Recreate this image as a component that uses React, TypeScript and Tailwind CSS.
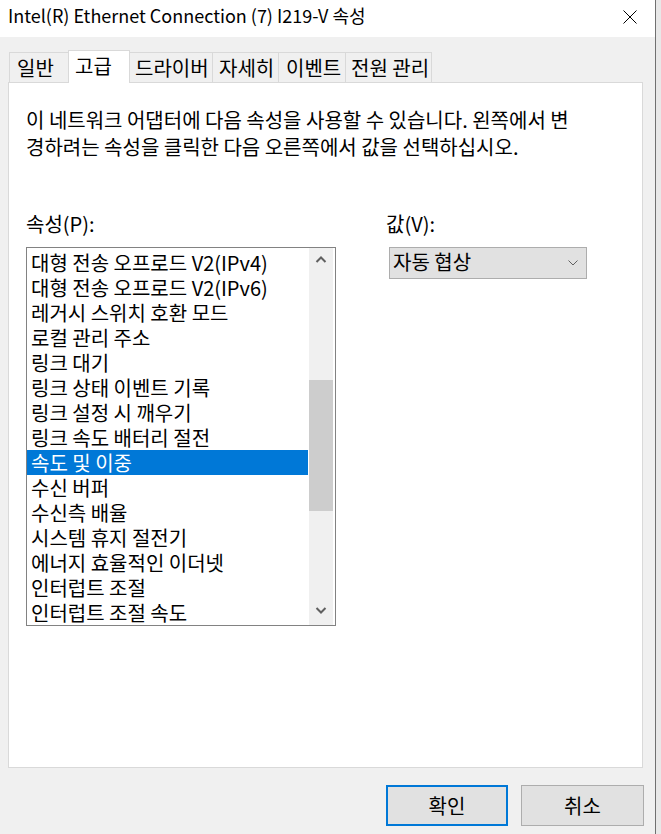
import React from "react";

const items = [
  "대형 전송 오프로드 V2(IPv4)",
  "대형 전송 오프로드 V2(IPv6)",
  "레거시 스위치 호환 모드",
  "로컬 관리 주소",
  "링크 대기",
  "링크 상태 이벤트 기록",
  "링크 설정 시 깨우기",
  "링크 속도 배터리 절전",
  "속도 및 이중",
  "수신 버퍼",
  "수신측 배율",
  "시스템 휴지 절전기",
  "에너지 효율적인 이더넷",
  "인터럽트 조절",
  "인터럽트 조절 속도",
];

const SELECTED = 8;

function Chevron({ up }: { up?: boolean }) {
  return (
    <svg width="12" height="9" viewBox="0 0 12 9">
      <polyline
        points={up ? "1.5,7 6,2.5 10.5,7" : "1.5,2 6,6.5 10.5,2"}
        fill="none"
        stroke="#606060"
        strokeWidth="2"
      />
    </svg>
  );
}

export default function App() {
  return (
    <div className="w-[661px] h-[834px] flex overflow-hidden bg-[#e8e8e8] text-black text-[20px] font-['Noto_Sans_CJK_KR',sans-serif]">
      <div className="w-[655px] h-full flex flex-col bg-[#f0f0f0]">
        {/* Title bar */}
        <div className="h-[37px] shrink-0 bg-white flex items-start justify-between pl-[8px] pr-[18px]">
          <span className="block pt-[3px] text-[18px] leading-[24px] whitespace-nowrap">
            Intel(R) Ethernet Connection (7) I219-V 속성
          </span>
          <svg width="14" height="14" viewBox="0 0 14 14" className="mt-[10px]">
            <path d="M0.5 0.5 L13.5 13.5 M13.5 0.5 L0.5 13.5" stroke="#000" strokeWidth="1" fill="none" />
          </svg>
        </div>

        {/* Body */}
        <div className="pl-[8px] pt-[13px] flex flex-col">
          {/* Tabs */}
          <div className="h-[33px] flex items-end pl-[1px] relative z-10">
            <div className="w-[59px] h-[30px] mb-px border-l border-t border-[#d9d9d9] bg-[#f0f0f0] pl-[7px] leading-[29px] whitespace-nowrap">
              일반
            </div>
            <div className="w-[62px] h-[33px] border-l border-t border-r border-[#d9d9d9] bg-white pl-[6px] leading-[29px] whitespace-nowrap">
              고급
            </div>
            <div className="w-[82px] h-[30px] mb-px border-t border-[#d9d9d9] bg-[#f0f0f0] pl-[5px] leading-[29px] whitespace-nowrap">
              드라이버
            </div>
            <div className="w-[66px] h-[30px] mb-px border-l border-t border-[#d9d9d9] bg-[#f0f0f0] pl-[6px] leading-[29px] whitespace-nowrap">
              자세히
            </div>
            <div className="w-[67px] h-[30px] mb-px border-l border-t border-[#d9d9d9] bg-[#f0f0f0] pl-[7px] leading-[29px] whitespace-nowrap">
              이벤트
            </div>
            <div className="w-[87px] h-[30px] mb-px border-l border-t border-r border-[#d9d9d9] bg-[#f0f0f0] pl-[5px] leading-[29px] whitespace-nowrap">
              전원 관리
            </div>
          </div>

          {/* Panel */}
          <div className="-mt-px w-[635px] h-[686px] border border-[#d9d9d9] bg-white pl-[17px] pt-[23px]">
            <p className="leading-[27px] whitespace-nowrap">
              이 네트워크 어댑터에 다음 속성을 사용할 수 있습니다. 왼쪽에서 변
              <br />
              경하려는 속성을 클릭한 다음 오른쪽에서 값을 선택하십시오.
            </p>

            <div className="mt-[50px] flex gap-[50px]">
              {/* Left column */}
              <div className="w-[310px] flex flex-col">
                <div className="leading-[27px]">속성(P):</div>
                <div className="mt-[10px] h-[379px] border border-[#828282] flex">
                  <div className="w-[281px] pt-[2px] flex flex-col">
                    {items.map((it, i) => (
                      <div
                        key={it}
                        className={
                          i === SELECTED
                            ? "h-[25px] leading-[25px] pl-[4px] whitespace-nowrap bg-[#0078d7] text-white"
                            : "h-[25px] leading-[25px] pl-[4px] whitespace-nowrap"
                        }
                      >
                        {it}
                      </div>
                    ))}
                  </div>
                  <div className="w-[24px] ml-[1px] bg-[#f0f0f0] flex flex-col">
                    <div className="h-[25px] flex items-center justify-center pb-[3px]">
                      <Chevron up />
                    </div>
                    <div className="flex-1 flex flex-col">
                      <div className="mt-[107px] h-[131px] bg-[#cdcdcd]" />
                    </div>
                    <div className="h-[25px] flex items-center justify-center pb-[4px]">
                      <Chevron />
                    </div>
                  </div>
                </div>
              </div>

              {/* Right column */}
              <div className="flex flex-col">
                <div className="leading-[27px]">값(V):</div>
                <div className="mt-[10px] ml-[3px] w-[198px] h-[32px] border border-[#adadad] bg-[#e1e1e1] flex items-center justify-between pl-[3px] pr-[8px] pb-[3px]">
                  <span className="leading-[24px] whitespace-nowrap">자동 협상</span>
                  <svg width="10" height="6" viewBox="0 0 10 6" className="mt-[3px]">
                    <polyline points="0.5,0.5 5,5 9.5,0.5" fill="none" stroke="#606060" strokeWidth="1" />
                  </svg>
                </div>
              </div>
            </div>
          </div>

          {/* Buttons */}
          <div className="mt-[17px] ml-[378px] flex gap-[13px]">
            <div className="w-[122px] h-[41px] border-2 border-[#0078d7] bg-[#e1e1e1] flex items-center justify-center">
              <span className="leading-[24px]">확인</span>
            </div>
            <div className="w-[123px] h-[41px] border border-[#adadad] bg-[#e1e1e1] flex items-center justify-center">
              <span className="leading-[24px]">취소</span>
            </div>
          </div>
        </div>
      </div>
      <div className="w-px h-full bg-[#707070]" />
      <div className="flex-1" />
    </div>
  );
}
